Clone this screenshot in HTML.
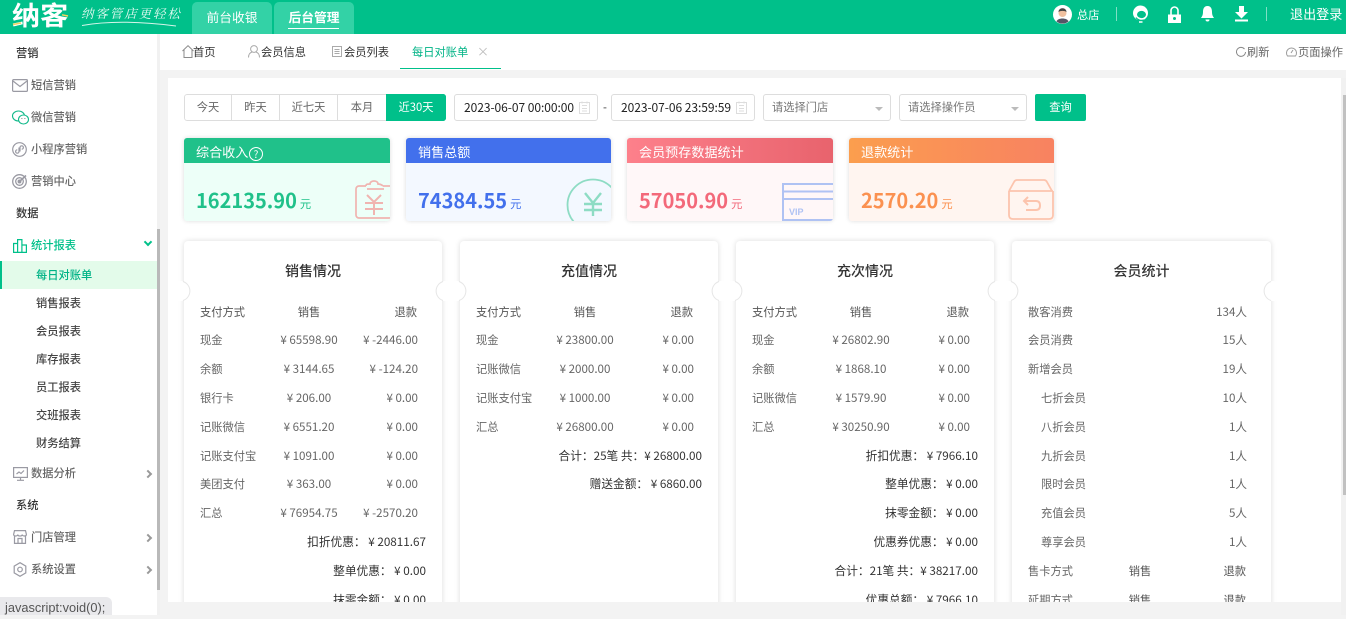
<!DOCTYPE html>
<html lang="zh"><head><meta charset="utf-8"><title>每日对账单</title>
<style>
*{box-sizing:border-box}
html,body{margin:0;padding:0;width:1346px;height:615px;overflow:hidden;background:#f3f3f3;font-size:11.25px;color:#666}
body{font-family:"Noto Sans CJK SC","Liberation Sans",sans-serif}
.a{position:absolute;white-space:nowrap;line-height:20px;height:20px}
.abs{position:absolute}
svg{position:absolute;overflow:visible;fill:none}
.hd{position:absolute;left:0;top:0;width:1346px;height:34px;background:#00c08a}
.tabh{position:absolute;top:2px;height:32px;width:80px;background:#33d2a6;border-radius:5px 5px 0 0;color:#fff;font-size:12.75px;line-height:30px;text-align:center}
.sec{position:absolute;left:16px;color:#333;font-weight:500;line-height:20px;white-space:nowrap}
.mi{position:absolute;left:31px;color:#666;font-weight:500;line-height:20px;white-space:nowrap}
.sub{position:absolute;left:36px;color:#444;font-weight:500;line-height:20px;white-space:nowrap}
.chev{position:absolute;left:144.5px;width:6px;height:6px;border-top:2px solid #999;border-right:2px solid #999;transform:rotate(45deg)}
.btn{position:absolute;top:94px;height:27px;line-height:25px;text-align:center;color:#666;border:1px solid #ddd;background:#fff}
.inp{position:absolute;top:94px;height:27px;line-height:25px;border:1px solid #ddd;border-radius:3px;background:#fff;color:#222;padding-left:9px;white-space:nowrap}
.dt{font-size:12px;letter-spacing:-.05px}
.tri{position:absolute;top:12px;width:0;height:0;border-left:4px solid transparent;border-right:4px solid transparent;border-top:4px solid #bbb}
.st{position:absolute;top:138px;height:83px;border-radius:3px;box-shadow:0 0 5px rgba(0,0,0,.14);overflow:hidden}
.st .h{position:absolute;left:0;top:0;width:100%;height:25px;color:#fff;font-size:13.1px;line-height:27px;padding-left:12px;white-space:nowrap}
.st .v{position:absolute;left:12px;top:47px;font-size:20px;font-weight:700;line-height:30px;white-space:nowrap}
.st .v i{font-style:normal;font-weight:400;font-size:11.25px;margin-left:3px}
.card{position:absolute;top:241px;width:258px;height:400px;background:#fff;border-radius:4px;box-shadow:0 0 6px rgba(0,0,0,.14)}
.card .tt{position:absolute;left:0;width:100%;top:20px;text-align:center;font-size:14px;font-weight:500;color:#333;line-height:20px}
.l,.m,.r,.s{position:absolute;white-space:nowrap;line-height:20px;color:#666}
.l{left:16px}
.m{left:65px;width:120px;text-align:center;font-size:11.6px}
.r{right:24px;font-size:11.6px}
.s{right:16px;color:#333;font-size:11.7px}
.hx{color:#555;font-size:11.25px}
.r.hx{right:25px}
</style></head><body>

<div class="abs" style="left:0;top:0;width:1346px;height:602px;overflow:hidden">
 <div class="abs" style="left:160px;top:34px;width:1186px;height:36px;background:#fff"></div>
 <div class="abs" style="left:168px;top:78px;width:1173px;height:530px;background:#fff"></div>

 <!-- filters -->
 <div class="abs" style="left:184px;top:94px;width:262px;height:27px;border-radius:3px;overflow:hidden">
  <div class="btn" style="left:0;top:0;width:48px;border-radius:3px 0 0 3px">今天</div>
  <div class="btn" style="left:47px;top:0;width:49px">昨天</div>
  <div class="btn" style="left:95px;top:0;width:59px">近七天</div>
  <div class="btn" style="left:153px;top:0;width:50px">本月</div>
  <div class="btn" style="left:202px;top:0;width:60px;background:#00c08a;border-color:#00c08a;color:#fff">近30天</div>
 </div>
 <div class="inp dt" style="left:454px;width:144px">2023-06-07 00:00:00
  <svg style="left:124px;top:6px" width="11" height="13" viewBox="0 0 11 13"><rect x=".5" y="1.5" width="10" height="11" stroke="#ddd"/><path d="M3 4.500h5M3 7.500h5M3 10h5M3 .5v2M8 .5v2" stroke="#ddd"/></svg></div>
 <div class="a" style="left:603px;top:97px;color:#333">-</div>
 <div class="inp dt" style="left:611px;width:144px">2023-07-06 23:59:59
  <svg style="left:124px;top:6px" width="11" height="13" viewBox="0 0 11 13"><rect x=".5" y="1.5" width="10" height="11" stroke="#ddd"/><path d="M3 4.500h5M3 7.500h5M3 10h5M3 .5v2M8 .5v2" stroke="#ddd"/></svg></div>
 <div class="inp" style="left:763px;width:128px;color:#777;padding-left:8px">请选择门店<span class="tri" style="left:111px"></span></div>
 <div class="inp" style="left:899px;width:128px;color:#777;padding-left:8px">请选择操作员<span class="tri" style="left:111px"></span></div>
 <div class="abs" style="left:1035px;top:94px;width:51px;height:27px;background:#00c08a;border-radius:2px;color:#fff;text-align:center;line-height:27px">查询</div>

 <!-- stats -->
 <div class="st" style="left:184px;width:206px;background:#edfff8">
  <div class="h" style="background:#20c18a">综合收入<svg style="left:65px;top:9px" width="14" height="14" viewBox="0 0 14 14"><circle cx="7" cy="7" r="6.500" stroke="#fff"/><text x="7" y="11" font-size="10" fill="#fff" text-anchor="middle">?</text></svg></div>
  <div class="v" style="color:#20c18a">162135.90<i>元</i></div>
  <svg style="left:171px;top:42px" width="36" height="40" viewBox="0 0 36 40" stroke="#f0b4b0" stroke-width="1.700"><path d="M11 6H4a3 3 0 0 0-3 3v26a3 3 0 0 0 3 3h32M28 6h8M11 6c0-2 1-2 4-2 0-4 8-4 8 0 3 0 4 1 5 2M12 9h17"/><path d="M12 15l7 7 7-7M10 23h18M10 29h18M19 22v13" stroke-width="2"/></svg>
 </div>
 <div class="st" style="left:406px;width:205px;background:#f3f8ff">
  <div class="h" style="background:#4270ec">销售总额</div>
  <div class="v" style="color:#4270ec">74384.55<i>元</i></div>
  <svg style="left:161px;top:41px" width="52" height="52" viewBox="0 0 52 52" stroke="#8edcc4" stroke-width="1.800"><circle cx="26" cy="26" r="25.500"/><path d="M18 14l8 10 8-10M17 25h18M17 31h18M26 24v13" stroke-width="2.400"/></svg>
 </div>
 <div class="st" style="left:627px;width:206px;background:#fff7f8">
  <div class="h" style="background:linear-gradient(90deg,#fd808b,#e8636d)">会员预存数据统计</div>
  <div class="v" style="color:#f3697a">57050.90<i>元</i></div>
  <svg style="left:155px;top:45px" width="51" height="38" viewBox="0 0 51 38" stroke="#afc2f3" stroke-width="2"><path d="M51 1H1v36h50M1 8.500h50M1 16h50"/><text x="7" y="32" font-size="9" font-weight="700" fill="#afc2f3" stroke="none" font-family="Liberation Sans">VIP</text></svg>
 </div>
 <div class="st" style="left:849px;width:205px;background:#fff5f0">
  <div class="h" style="background:linear-gradient(90deg,#fb9e4e,#f88261)">退款统计</div>
  <div class="v" style="color:#fb9150">2570.20<i>元</i></div>
  <svg style="left:159px;top:41px" width="46" height="42" viewBox="0 0 46 42" stroke="#fcc4ad" stroke-width="1.800"><path d="M1 12L6 3Q7 1 9 1H36Q38 1 39 3L44 12M1 12H45M1 12V36Q1 40 5 40H41Q45 40 45 36V12"/><path d="M20 18l-4 4 4 4M16 22H28q4 0 4 4.500t-4 4.500H18" stroke-width="2"/></svg>
 </div>

 <!-- card 1 -->
 <div class="card" style="left:184px"><div class="tt">销售情况</div>
  <span class="l hx" style="top:61px">支付方式</span><span class="m hx" style="top:61px">销售</span><span class="r hx" style="top:61px">退款</span>
  <span class="l" style="top:89px">现金</span><span class="m" style="top:89px">¥ 65598.90</span><span class="r" style="top:89px">¥ -2446.00</span>
  <span class="l" style="top:118px">余额</span><span class="m" style="top:118px">¥ 3144.65</span><span class="r" style="top:118px">¥ -124.20</span>
  <span class="l" style="top:147px">银行卡</span><span class="m" style="top:147px">¥ 206.00</span><span class="r" style="top:147px">¥ 0.00</span>
  <span class="l" style="top:176px">记账微信</span><span class="m" style="top:176px">¥ 6551.20</span><span class="r" style="top:176px">¥ 0.00</span>
  <span class="l" style="top:205px">记账支付宝</span><span class="m" style="top:205px">¥ 1091.00</span><span class="r" style="top:205px">¥ 0.00</span>
  <span class="l" style="top:233px">美团支付</span><span class="m" style="top:233px">¥ 363.00</span><span class="r" style="top:233px">¥ 0.00</span>
  <span class="l" style="top:262px">汇总</span><span class="m" style="top:262px">¥ 76954.75</span><span class="r" style="top:262px">¥ -2570.20</span>
  <span class="s" style="top:291px">扣折优惠： ¥ 20811.67</span>
  <span class="s" style="top:320px">整单优惠： ¥ 0.00</span>
  <span class="s" style="top:349px">抹零金额： ¥ 0.00</span>
 </div>
 <!-- card 2 -->
 <div class="card" style="left:460px"><div class="tt">充值情况</div>
  <span class="l hx" style="top:61px">支付方式</span><span class="m hx" style="top:61px">销售</span><span class="r hx" style="top:61px">退款</span>
  <span class="l" style="top:89px">现金</span><span class="m" style="top:89px">¥ 23800.00</span><span class="r" style="top:89px">¥ 0.00</span>
  <span class="l" style="top:118px">记账微信</span><span class="m" style="top:118px">¥ 2000.00</span><span class="r" style="top:118px">¥ 0.00</span>
  <span class="l" style="top:147px">记账支付宝</span><span class="m" style="top:147px">¥ 1000.00</span><span class="r" style="top:147px">¥ 0.00</span>
  <span class="l" style="top:176px">汇总</span><span class="m" style="top:176px">¥ 26800.00</span><span class="r" style="top:176px">¥ 0.00</span>
  <span class="s" style="top:205px">合计：25笔 共：¥ 26800.00</span>
  <span class="s" style="top:233px">赠送金额： ¥ 6860.00</span>
 </div>
 <!-- card 3 -->
 <div class="card" style="left:736px"><div class="tt">充次情况</div>
  <span class="l hx" style="top:61px">支付方式</span><span class="m hx" style="top:61px">销售</span><span class="r hx" style="top:61px">退款</span>
  <span class="l" style="top:89px">现金</span><span class="m" style="top:89px">¥ 26802.90</span><span class="r" style="top:89px">¥ 0.00</span>
  <span class="l" style="top:118px">余额</span><span class="m" style="top:118px">¥ 1868.10</span><span class="r" style="top:118px">¥ 0.00</span>
  <span class="l" style="top:147px">记账微信</span><span class="m" style="top:147px">¥ 1579.90</span><span class="r" style="top:147px">¥ 0.00</span>
  <span class="l" style="top:176px">汇总</span><span class="m" style="top:176px">¥ 30250.90</span><span class="r" style="top:176px">¥ 0.00</span>
  <span class="s" style="top:205px">折扣优惠： ¥ 7966.10</span>
  <span class="s" style="top:233px">整单优惠： ¥ 0.00</span>
  <span class="s" style="top:262px">抹零金额： ¥ 0.00</span>
  <span class="s" style="top:291px">优惠券优惠： ¥ 0.00</span>
  <span class="s" style="top:320px">合计：21笔 共：¥ 38217.00</span>
  <span class="s" style="top:349px">优惠总额： ¥ 7966.10</span>
 </div>
 <!-- card 4 -->
 <div class="card" style="left:1012px;width:259px"><div class="tt">会员统计</div>
  <span class="l" style="top:61px">散客消费</span><span class="r" style="top:61px">134人</span>
  <span class="l" style="top:89px">会员消费</span><span class="r" style="top:89px">15人</span>
  <span class="l" style="top:118px">新增会员</span><span class="r" style="top:118px">19人</span>
  <span class="l" style="top:147px;left:29px">七折会员</span><span class="r" style="top:147px">10人</span>
  <span class="l" style="top:176px;left:29px">八折会员</span><span class="r" style="top:176px">1人</span>
  <span class="l" style="top:205px;left:29px">九折会员</span><span class="r" style="top:205px">1人</span>
  <span class="l" style="top:233px;left:29px">限时会员</span><span class="r" style="top:233px">1人</span>
  <span class="l" style="top:262px;left:29px">充值会员</span><span class="r" style="top:262px">5人</span>
  <span class="l" style="top:291px;left:29px">尊享会员</span><span class="r" style="top:291px">1人</span>
  <span class="l" style="top:320px">售卡方式</span><span class="m hx" style="top:320px;left:68px">销售</span><span class="r hx" style="top:320px;right:25px">退款</span>
  <span class="l" style="top:349px">延期方式</span><span class="m hx" style="top:349px;left:68px">销售</span><span class="r hx" style="top:349px;right:25px">退款</span>
 </div>
 <!-- ticket notches -->
 <svg style="left:171px;top:281px" width="20" height="20" viewBox="0 0 20 20"><circle cx="10" cy="10" r="10" fill="#fff"/><path d="M12 .5A10 10 0 0 1 12 19.500" stroke="#e6e6e6"/></svg>
 <svg style="left:435px;top:281px" width="32" height="20" viewBox="0 0 32 20"><path d="M10 0H22A10 10 0 0 1 22 20H10A10 10 0 0 1 10 0z" fill="#fff"/><path d="M8 .5A10 10 0 0 0 8 19.500M24 .5A10 10 0 0 1 24 19.500" stroke="#e6e6e6"/></svg>
 <svg style="left:711px;top:281px" width="32" height="20" viewBox="0 0 32 20"><path d="M10 0H22A10 10 0 0 1 22 20H10A10 10 0 0 1 10 0z" fill="#fff"/><path d="M8 .5A10 10 0 0 0 8 19.500M24 .5A10 10 0 0 1 24 19.500" stroke="#e6e6e6"/></svg>
 <svg style="left:987px;top:281px" width="32" height="20" viewBox="0 0 32 20"><path d="M10 0H22A10 10 0 0 1 22 20H10A10 10 0 0 1 10 0z" fill="#fff"/><path d="M8 .5A10 10 0 0 0 8 19.500M24 .5A10 10 0 0 1 24 19.500" stroke="#e6e6e6"/></svg>
 <svg style="left:1263px;top:281px" width="20" height="20" viewBox="0 0 20 20"><circle cx="10" cy="10" r="10" fill="#fff"/><path d="M8 .5A10 10 0 0 0 8 19.500" stroke="#e6e6e6"/></svg>
</div>

<div class="abs" style="left:1341px;top:78px;width:5px;height:537px;background:#f1f1f1"></div>
<div class="abs" style="left:1343px;top:95px;width:3px;height:400px;background:#c1c1c1"></div>

<!-- tabs -->
<svg style="left:182px;top:45px" width="12" height="13" viewBox="0 0 12 13" stroke="#8b8b8b"><path d="M.5 6L6 .7 11.500 6M2 5v7.500h8V5"/></svg>
<div class="a" style="left:193px;top:42px;color:#333">首页</div>
<svg style="left:248px;top:45px" width="12" height="13" viewBox="0 0 12 13" stroke="#aaa"><circle cx="6" cy="4" r="3.400"/><path d="M.5 12.500c0-4 2-5 3.500-5.500M11.500 12.500c0-4-2-5-3.500-5.500"/></svg>
<div class="a" style="left:261px;top:42px;color:#333">会员信息</div>
<svg style="left:332px;top:46px" width="10" height="11" viewBox="0 0 10 11" stroke="#aaa"><rect x=".5" y=".5" width="9" height="10"/><path d="M2.500 3.500h5M2.500 5.500h5M2.500 7.500h5"/></svg>
<div class="a" style="left:344px;top:42px;color:#333">会员列表</div>
<div class="a" style="left:412px;top:42px;color:#00b386">每日对账单</div>
<div class="a" style="left:477px;top:42px;color:#bbb;font-size:12px">×</div>
<div class="abs" style="left:400px;top:68px;width:101px;height:1px;background:#00c08a"></div>
<svg style="left:1236px;top:47px" width="10" height="10" viewBox="0 0 10 10" stroke="#888"><path d="M8.500 2A4.500 4.500 0 1 0 9.500 5"/></svg>
<div class="a" style="left:1247px;top:42px;color:#666">刷新</div>
<svg style="left:1286px;top:47px" width="11" height="10" viewBox="0 0 11 10" stroke="#999"><path d="M1.500 9A5 5 0 1 1 9.500 9zM5 6l2-3"/></svg>
<div class="a" style="left:1298px;top:42px;color:#666">页面操作</div>

<!-- sidebar -->
<div class="abs" style="left:0;top:34px;width:157px;height:581px;background:#fff"></div>
<div class="abs" style="left:157px;top:34px;width:3px;height:581px;background:#f1f1f1"></div>
<div class="abs" style="left:157px;top:229px;width:3px;height:361px;background:#b9b9b9"></div>
<div class="sec" style="top:43px">营销</div>
<svg style="left:12px;top:79px" width="16" height="13" viewBox="0 0 16 13" stroke="#9a9aa3" stroke-width="1.200"><rect x=".6" y=".6" width="14.800" height="11.800" rx="1"/><path d="M1 2l7 5.500L15 2"/></svg>
<div class="mi" style="top:75px">短信营销</div>
<svg style="left:12px;top:110px" width="17" height="15" viewBox="0 0 17 15" stroke="#11b98a" stroke-width="1.100"><ellipse cx="6.500" cy="6" rx="6" ry="5"/><ellipse cx="11.500" cy="9.500" rx="5" ry="4.500" fill="#fff"/><path d="M9.500 8.500h.8M12.500 8.500h.8" stroke="#666"/></svg>
<div class="mi" style="top:107px">微信营销</div>
<svg style="left:12px;top:142px" width="15" height="15" viewBox="0 0 15 15" stroke="#9a9aa3" stroke-width="1.200"><circle cx="7.500" cy="7.500" r="6.800"/><path d="M7 5.500V9.500a1.700 1.700 0 1 1-1.700-1.700M8 9.500V5.500a1.700 1.700 0 1 1 1.700 1.700"/></svg>
<div class="mi" style="top:139px">小程序营销</div>
<svg style="left:12px;top:174px" width="15" height="15" viewBox="0 0 15 15" stroke="#9a9aa3" stroke-width="1.300"><circle cx="7.500" cy="7.500" r="6.800"/><circle cx="7.500" cy="7.500" r="3.800"/><path d="M7.500 7.500L14 1.500" stroke-width="1.600"/><circle cx="7.500" cy="7.500" r="1.300" fill="#9a9aa3"/></svg>
<div class="mi" style="top:171px">营销中心</div>
<div class="sec" style="top:203px">数据</div>
<svg style="left:13px;top:239px" width="14" height="14" viewBox="0 0 14 14" stroke="#00c08a" stroke-width="1.200"><path d="M.6 13.400V4.500h4v8.900M4.600 13.400V.6h4.300v12.800M8.900 13.400V6h4.500v7.400M0 13.400h14"/></svg>
<div class="mi" style="top:235px;color:#00c08a">统计报表</div>
<div class="abs" style="left:145px;top:239px;width:6px;height:6px;border-right:2px solid #00c08a;border-bottom:2px solid #00c08a;transform:rotate(45deg)"></div>
<div class="abs" style="left:0;top:261px;width:157px;height:28px;background:#e3fbea"></div>
<div class="abs" style="left:0;top:261px;width:2px;height:28px;background:#00c08a"></div>
<div class="sub" style="top:265px;color:#00b386">每日对账单</div>
<div class="sub" style="top:293px">销售报表</div>
<div class="sub" style="top:321px">会员报表</div>
<div class="sub" style="top:349px">库存报表</div>
<div class="sub" style="top:377px">员工报表</div>
<div class="sub" style="top:405px">交班报表</div>
<div class="sub" style="top:433px">财务结算</div>
<svg style="left:13px;top:467px" width="15" height="14" viewBox="0 0 15 14" stroke="#9a9aa3" stroke-width="1.200"><rect x=".6" y=".6" width="13.800" height="9.800"/><path d="M3.500 7l2.500-2 2 1.500 3-3M7.500 10.500v2.500M4 13.300h7"/></svg>
<div class="mi" style="top:463px">数据分析</div>
<div class="chev" style="top:471px"></div>
<div class="sec" style="top:495px">系统</div>
<svg style="left:13px;top:530px" width="14" height="14" viewBox="0 0 14 14" stroke="#9a9aa3" stroke-width="1.200"><path d="M1.500 5.500V13.400h11V5.500M.6 4.500L1.500.6h11l.9 3.900c0 2-4 2-4.200 0 0 2-4.400 2-4.400 0C4.600 6.500.6 6.500.6 4.500zM5 13.400V8.500h4v4.900"/></svg>
<div class="mi" style="top:527px">门店管理</div>
<div class="chev" style="top:535px"></div>
<svg style="left:13px;top:562px" width="14" height="15" viewBox="0 0 14 15" stroke="#9a9aa3" stroke-width="1.200"><path d="M7 .7l5.800 3.400v6.800L7 14.300 1.200 10.900V4.100z"/><circle cx="7" cy="7.500" r="2.300"/></svg>
<div class="mi" style="top:559px">系统设置</div>
<div class="chev" style="top:567px"></div>

<!-- header -->
<div class="hd"></div>
<div class="a" style="left:12px;top:-1px;height:32px;line-height:32px;font-size:26px;font-weight:700;color:#fff;transform:scaleX(1.080);transform-origin:0 50%">纳客</div>
<svg style="left:12px;top:14px" width="58" height="13" viewBox="0 0 58 13" stroke="#f4d35e" stroke-width="1.500"><path d="M1 10.500l8-1.500M50 .8l6 1.200"/></svg>
<div class="a" style="left:81px;top:3px;font-size:12.500px;color:#eafbf5;font-style:italic;letter-spacing:1.900px;font-family:'Noto Serif CJK SC','Liberation Serif',serif">纳客管店更轻松</div>
<svg style="left:82px;top:20px" width="94" height="8" viewBox="0 0 94 8" stroke="#d6f5ea"><path d="M0 5.500C25 1 55 1 94 6"/></svg>
<div class="tabh" style="left:192px">前台收银</div>
<div class="tabh" style="left:274px;font-weight:700">后台管理</div>
<div class="abs" style="left:288px;top:28px;width:51px;height:1px;background:#fff"></div>
<svg style="left:1053px;top:5px" width="19" height="19" viewBox="0 0 19 19"><circle cx="9.500" cy="9.500" r="9.500" fill="#fff"/><circle cx="9.500" cy="8" r="4" fill="#f0c0a0"/><path d="M5.500 7c0-5 8-5 8 0-2-1.500-6-1.500-8 0z" fill="#444"/><path d="M3.500 16.500c1-4 11-4 12 0a9.500 9.500 0 0 1-12 0z" fill="#556"/></svg>
<div class="a" style="left:1077px;top:5px;color:#fff">总店</div>
<div class="abs" style="left:1116px;top:7px;width:1px;height:14px;background:#7fdfc5"></div>
<svg style="left:1133px;top:5px" width="15" height="18" viewBox="0 0 15 18"><circle cx="7.500" cy="8" r="7.500" fill="#fff"/><ellipse cx="8.500" cy="9.500" rx="4.500" ry="3.600" fill="#00c08a"/><path d="M3 12.500c1.500 2.500 5 3.500 8 2.500" stroke="#00c08a" stroke-width="1.200"/><path d="M6 17h3.500" stroke="#fff" stroke-width="1.500"/></svg>
<svg style="left:1168px;top:6px" width="13" height="17" viewBox="0 0 13 17"><path d="M3 9V4.500a3.500 3.500 0 0 1 7 0V9" stroke="#fff" stroke-width="1.600"/><path d="M0 8.500h13V17H0z" fill="#fff"/><circle cx="6.500" cy="12.500" r="1.500" fill="#00c08a"/></svg>
<svg style="left:1201px;top:6px" width="13" height="16" viewBox="0 0 13 16" fill="#fff"><path d="M6.500 0c3.500 0 4.500 3 4.500 6 0 3 1 4.500 2 6H0c1-1.500 2-3 2-6 0-3 1-6 4.500-6zM4.500 13.500h4a2 2 0 0 1-4 0z" fill="#fff"/></svg>
<svg style="left:1235px;top:6px" width="13" height="16" viewBox="0 0 13 16"><path d="M4 0h5v6h4l-6.500 6.500L0 6h4z" fill="#fff"/><path d="M0 14.500h13" stroke="#fff" stroke-width="2"/></svg>
<div class="abs" style="left:1266px;top:7px;width:1px;height:14px;background:#7fdfc5"></div>
<div class="a" style="left:1290px;top:4px;color:#fff;font-size:13.100px">退出登录</div>

<!-- status -->
<div class="a" style="left:0;top:597px;width:112px;height:18px;background:#e9e9ec;border-radius:0 6px 0 0;color:#555;font-size:12.800px;padding-left:5px;line-height:22px;font-family:'Liberation Sans',sans-serif">javascript:void(0);</div>
</body></html>
